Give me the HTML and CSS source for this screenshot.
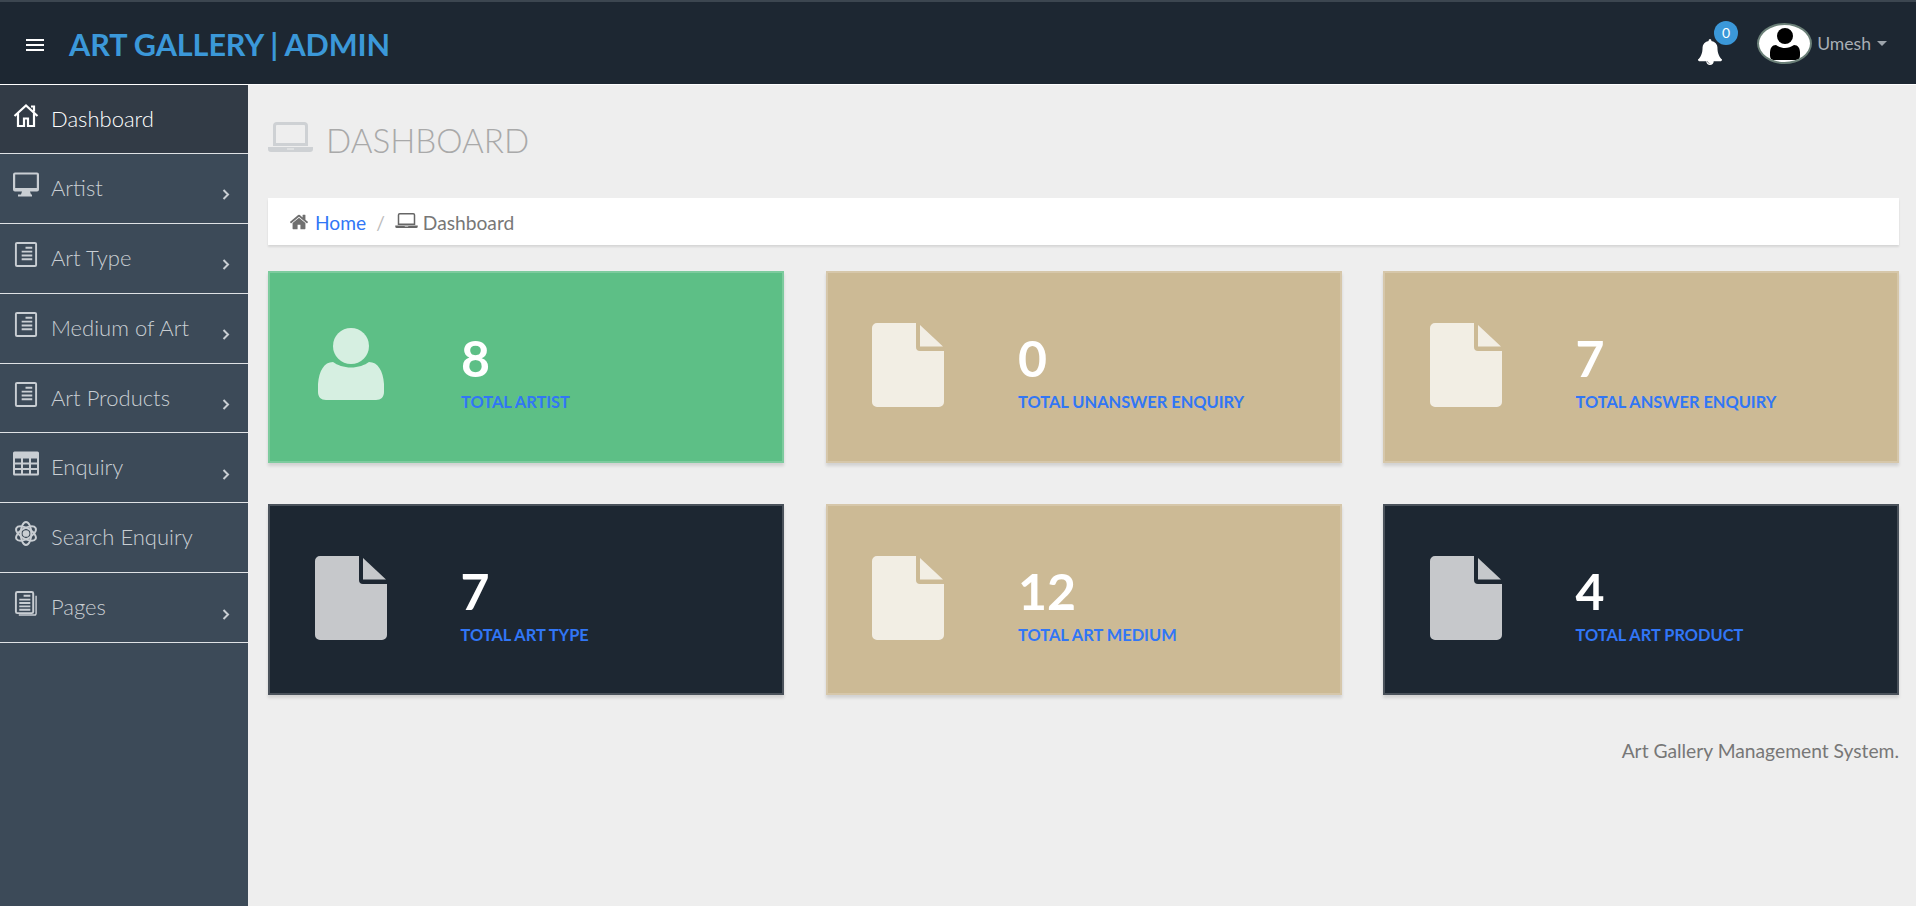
FILE: index.html
```html
<!DOCTYPE html>
<html lang="en">
<head>
<meta charset="utf-8">
<title>Art Gallery | Admin</title>
<link rel="stylesheet" href="styles.css">
</head>
<body>
<svg class="defs" width="0" height="0" aria-hidden="true">
  <symbol id="fa-home" viewBox="0 0 1792 1792"><path d="M1472 992v480q0 26-19 45t-45 19h-384v-384h-256v384h-384q-26 0-45-19t-19-45v-480q0-1 .5-3t.5-3l575-474 575 474q1 2 1 6zm223-69l-62 74q-8 9-21 11h-3q-13 0-21-7l-692-577-692 577q-12 8-24 7-13-2-21-11l-62-74q-8-10-7-23.5t11-21.5l719-599q32-26 76-26t76 26l244 204v-195q0-14 9-23t23-9h192q14 0 23 9t9 23v408l219 182q10 8 11 21.5t-7 23.5z"/></symbol>
  <symbol id="fa-bell" viewBox="0 0 1792 1792"><path d="M912 1696q0-16-16-16-59 0-101.5-42.5t-42.5-101.5q0-16-16-16t-16 16q0 73 51.5 124.5t124.5 51.5q16 0 16-16zm816-288q0 52-38 90t-90 38h-448q0 106-75 181t-181 75-181-75-75-181h-448q-52 0-90-38t-38-90q50-42 91-88t85-119.5 74.5-158.5 50-206 19.5-260q0-152 117-282.5t307-158.5q-8-19-8-39 0-40 28-68t68-28 68 28 28 68q0 20-8 39 190 28 307 158.5t117 282.5q0 139 19.5 260t50 206 74.5 158.5 85 119.5 91 88z"/></symbol>
  <symbol id="laptop" viewBox="0 0 45 30"><path fill-rule="evenodd" d="M9 0h27a4 4 0 0 1 4 4v20H5V4a4 4 0 0 1 4-4zm0 3a1 1 0 0 0-1 1v17h29V4a1 1 0 0 0-1-1z"/><path fill-rule="evenodd" d="M0 25h45v2a3 3 0 0 1-3 3H3a3 3 0 0 1-3-3zm19 1.6v1h7v-1z"/></symbol>
  <symbol id="i-house" viewBox="0 0 26 24"><path d="M1.500 12.500 13 2l11.500 10.500M5 10v12.500h6V15h4v7.500h6V10M18 3h3v5" fill="none" stroke="currentColor" stroke-width="2.200"/></symbol>
  <symbol id="i-desktop" viewBox="0 0 26 24"><path fill="currentColor" fill-rule="evenodd" d="M2 0h22a2 2 0 0 1 2 2v15a2 2 0 0 1-2 2h-7l1 3h1v2H5v-2h3l1-3H2a2 2 0 0 1-2-2V2a2 2 0 0 1 2-2zm.2 2v13.500h21.600V2z"/></symbol>
  <symbol id="i-doc" viewBox="0 0 23 26"><path d="M2.200 1h18.600a1.200 1.200 0 0 1 1.200 1.200v21.600a1.200 1.200 0 0 1-1.200 1.200H2.200A1.200 1.200 0 0 1 1 23.800V2.200A1.200 1.200 0 0 1 2.200 1z" fill="none" stroke="currentColor" stroke-width="2"/><path d="M11 6h7M7 10h11M7 14h11M7 18h11" stroke="currentColor" stroke-width="2" fill="none"/></symbol>
  <symbol id="i-table" viewBox="0 0 26 24"><path fill="currentColor" fill-rule="evenodd" d="M1.500 0h23A1.500 1.500 0 0 1 26 1.500v21a1.500 1.500 0 0 1-1.500 1.500h-23A1.500 1.500 0 0 1 0 22.500v-21A1.500 1.500 0 0 1 1.500 0zM2 7v4h6V7zm8 0v4h6V7zm8 0v4h6V7zM2 13v3.500h6V13zm8 0v3.500h6V13zm8 0v3.500h6V13zM2 18.500V22h6v-3.500zm8 0V22h6v-3.500zm8 0V22h6v-3.500z"/></symbol>
  <symbol id="i-atom" viewBox="0 0 24 26"><g fill="none" stroke="currentColor" stroke-width="2"><ellipse cx="12" cy="13" rx="11.500" ry="5.500" transform="rotate(30 12 13)"/><ellipse cx="12" cy="13" rx="11.500" ry="5.500" transform="rotate(-30 12 13)"/><ellipse cx="12" cy="13" rx="5.500" ry="12"/></g><circle cx="12" cy="13" r="3.500" fill="currentColor"/></symbol>
  <symbol id="i-pages" viewBox="0 0 23 26"><path d="M2.500 1h15a1.500 1.500 0 0 1 1.500 1.500v19a1.500 1.500 0 0 1-1.500 1.500h-15A1.500 1.500 0 0 1 1 21.500v-19A1.500 1.500 0 0 1 2.500 1z" fill="none" stroke="currentColor" stroke-width="2"/><path d="M22 5v18.500a1.500 1.500 0 0 1-1.500 1.500H4" fill="none" stroke="currentColor" stroke-width="1.500"/><path d="M9 5h7M4.500 9h11.500M4.500 12.500h11.500M4.500 16h11.500M4.500 19.500h11.500" stroke="currentColor" stroke-width="2" fill="none"/></symbol>
  <symbol id="i-chev" viewBox="0 0 8 11"><path d="M1.500 1l4.500 4.500L1.500 10" fill="none" stroke="currentColor" stroke-width="2"/></symbol>
  <symbol id="i-person" viewBox="0 0 66 72"><circle cx="33" cy="18" r="18"/><path d="M15 34c4 3 11 5.500 18 5.500S47 37 51 34c9 0 14 9 15 22v8c0 5-3 8-8 8H8c-5 0-8-3-8-8v-8C1 43 6 34 15 34z"/></symbol>
  <symbol id="i-file" viewBox="0 0 72 84"><path d="M5 0h39v24a4 4 0 0 0 4 4h24v51a5 5 0 0 1-5 5H5a5 5 0 0 1-5-5V5a5 5 0 0 1 5-5z"/><path d="M48 2l23 21.500H48z"/></symbol>
</svg>

<header class="topbar">
  <span class="burger"><i></i><i></i><i></i></span>
  <span class="brand">ART GALLERY | ADMIN</span>
  <div class="top-right">
    <span class="bell"><svg class="bell-icon"><use href="#fa-bell"/></svg><b class="badge">0</b></span>
    <span class="avatar"><svg viewBox="0 0 30 32" class="avatar-img"><circle cx="15" cy="8" r="8"/><path d="M6 17c3 2 6 3 9 3s6-1 9-3c4 0 6 3 6 8v2c0 3-1 5-4 5H4c-3 0-4-2-4-5v-2c0-5 2-8 6-8z"/></svg></span>
    <span class="user">Umesh</span>
    <span class="caret"></span>
  </div>
</header>

<div class="shell">
  <nav class="sidebar">
    <a class="nav-item active"><svg class="nav-icon"><use href="#i-house"/></svg><span class="nav-label">Dashboard</span></a>
    <a class="nav-item"><svg class="nav-icon"><use href="#i-desktop"/></svg><span class="nav-label">Artist</span><svg class="chev"><use href="#i-chev"/></svg></a>
    <a class="nav-item"><svg class="nav-icon"><use href="#i-doc"/></svg><span class="nav-label">Art Type</span><svg class="chev"><use href="#i-chev"/></svg></a>
    <a class="nav-item"><svg class="nav-icon"><use href="#i-doc"/></svg><span class="nav-label">Medium of Art</span><svg class="chev"><use href="#i-chev"/></svg></a>
    <a class="nav-item"><svg class="nav-icon"><use href="#i-doc"/></svg><span class="nav-label">Art Products</span><svg class="chev"><use href="#i-chev"/></svg></a>
    <a class="nav-item"><svg class="nav-icon"><use href="#i-table"/></svg><span class="nav-label">Enquiry</span><svg class="chev"><use href="#i-chev"/></svg></a>
    <a class="nav-item"><svg class="nav-icon"><use href="#i-atom"/></svg><span class="nav-label">Search Enquiry</span></a>
    <a class="nav-item"><svg class="nav-icon"><use href="#i-pages"/></svg><span class="nav-label">Pages</span><svg class="chev"><use href="#i-chev"/></svg></a>
  </nav>

  <main class="content">
    <h1 class="page-title"><svg class="title-icon"><use href="#laptop"/></svg>DASHBOARD</h1>
    <div class="crumbs">
      <svg class="crumb-home"><use href="#fa-home"/></svg><a class="crumb-link">Home</a>
      <span class="crumb-sep">/</span>
      <svg class="crumb-laptop"><use href="#laptop"/></svg><span>Dashboard</span>
    </div>
    <section class="cards">
      <article class="card green"><svg class="card-icon person"><use href="#i-person"/></svg><div class="card-text"><strong>8</strong><span>TOTAL ARTIST</span></div></article>
      <article class="card tan"><svg class="card-icon"><use href="#i-file"/></svg><div class="card-text"><strong>0</strong><span>TOTAL UNANSWER ENQUIRY</span></div></article>
      <article class="card tan"><svg class="card-icon"><use href="#i-file"/></svg><div class="card-text"><strong>7</strong><span>TOTAL ANSWER ENQUIRY</span></div></article>
      <article class="card dark"><svg class="card-icon"><use href="#i-file"/></svg><div class="card-text"><strong>7</strong><span>TOTAL ART TYPE</span></div></article>
      <article class="card tan"><svg class="card-icon"><use href="#i-file"/></svg><div class="card-text"><strong>12</strong><span>TOTAL ART MEDIUM</span></div></article>
      <article class="card dark"><svg class="card-icon"><use href="#i-file"/></svg><div class="card-text"><strong>4</strong><span>TOTAL ART PRODUCT</span></div></article>
    </section>
    <footer class="foot">Art Gallery Management System.</footer>
  </main>
</div>
</body>
</html>
```

FILE: styles.css
```css
* { box-sizing: border-box; }
html, body { margin: 0; height: 100%; }
body {
  font-family: Lato, "Liberation Sans", sans-serif;
  background: #eeeeee;
  color: #777;
  overflow: hidden;
  height: 906px;
  display: flex;
  flex-direction: column;
}
.defs { position: absolute; }

.topbar {
  height: 85px;
  flex: none;
  background: #1d2732;
  border-top: 2px solid #3c4650;
  border-bottom: 1px solid #fff;
  display: flex;
  align-items: center;
  padding: 0 29px 0 26px;
}
.burger { width: 18px; display: flex; flex-direction: column; gap: 3px; margin-top: 3px; }
.burger i { display: block; height: 2px; background: #fff; }
.brand {
  margin-left: 25px;
  margin-top: 2px;
  font-size: 30.6px;
  font-weight: 700;
  color: #3b98d9;
  letter-spacing: -0.1px;
  white-space: nowrap;
}
.top-right { margin-left: auto; display: flex; align-items: center; }
.bell { position: relative; width: 26px; height: 26px; margin-top: 17px; margin-right: 34px; }
.bell-icon { width: 26px; height: 26px; fill: #fff; display: block; }
.badge {
  position: absolute;
  left: 17px;
  top: -18px;
  width: 24px;
  height: 24px;
  border-radius: 50%;
  background: #3b98d9;
  color: #fff;
  font-size: 14px;
  font-weight: 400;
  line-height: 24px;
  text-align: center;
}
.avatar {
  width: 55px;
  height: 41px;
  border-radius: 50%;
  background: #fff;
  border: 2px solid #6b8078;
  display: flex;
  align-items: flex-end;
  justify-content: center;
  overflow: hidden;
  margin-top: 1px;
}
.avatar-img { width: 30px; height: 32px; fill: #000; margin-bottom: 2px; }
.user { margin-left: 5px; font-size: 17.6px; color: #a8aeb5; }
.caret {
  margin-left: 6px;
  width: 0;
  height: 0;
  border-left: 5px solid transparent;
  border-right: 5px solid transparent;
  border-top: 5px solid #9da4ab;
}

.shell { flex: 1; display: flex; min-height: 0; }
.sidebar {
  width: 248px;
  flex: none;
  background: #3c4a58;
  display: grid;
  grid-template-rows: 69px;
  grid-auto-rows: 69.86px;
  align-content: start;
}
.nav-item {
  position: relative;
  display: flex;
  align-items: center;
  width: 247.5px;
  padding: 0 12px 2px 13px;
  border-bottom: 1px solid #dfe2e5;
  color: #c9ced3;
  font-size: 22px;
  font-weight: 300;
}
.nav-item.active { background: #323b46; color: #fff; }
.nav-icon { width: 26px; height: 25px; flex: none; margin-top: -6px; }
.nav-label { margin-left: 12px; white-space: nowrap; }
.chev { margin-left: auto; width: 8px; height: 11px; margin-top: 15px; margin-right: 6px; flex: none; }

.content { flex: 1; min-width: 0; padding: 0 17px 0 20px; }
.page-title {
  margin: 0;
  height: 113px;
  display: flex;
  align-items: center;
  font-size: 33.2px;
  font-weight: 300;
  color: #a9a9a9;
  padding-bottom: 4px;
}
.title-icon { width: 45px; height: 30px; fill: #ced1d4; margin-right: 13px; margin-top: -6px; }
.crumbs {
  height: 47px;
  background: #fff;
  box-shadow: 0 2px 2px rgba(0,0,0,.1);
  display: flex;
  align-items: center;
  padding: 2px 21px 0;
  font-size: 19.2px;
  color: #777;
}
.crumb-home { width: 20px; height: 20px; fill: #6f6f6f; margin-right: 6px; margin-top: -2px; }
.crumb-link { color: #3176f6; }
.crumb-sep { color: #bbb; margin: 0 10px; }
.crumb-laptop { width: 23px; height: 15px; fill: #666; margin-right: 5px; margin-top: -4px; }

.cards {
  margin-top: 26px;
  display: grid;
  grid-template-columns: repeat(3, 1fr);
  grid-auto-rows: 191.5px;
  gap: 41px 41.5px;
}
.card {
  display: flex;
  align-items: center;
  position: relative;
  border: 2px solid rgba(255,255,255,.2);
  box-shadow: 0 3px 3px rgba(0,0,0,.12);
}
.green { background: #5dbf86; }
.tan { background: #ccba95; }
.dark { background: #1d2732; }
.card-icon {
  width: 72px;
  height: 84px;
  margin-left: 44.5px;
  margin-top: -3px;
  flex: none;
  fill: rgba(255,255,255,.75);
  overflow: visible;
}
.person { width: 66px; height: 72px; margin-left: 48px; margin-top: -5px; }
.card-text { margin-left: 74px; display: flex; flex-direction: column; padding-top: 9px; }
.person + .card-text { margin-left: 77px; }
.card-text strong {
  color: #fff;
  font-size: 50px;
  font-weight: 700;
  line-height: 60px;
}
.card-text span {
  color: #3176f6;
  font-size: 16.4px;
  font-weight: 700;
  line-height: 24px;
  margin-top: 2px;
  white-space: nowrap;
}
.foot {
  margin-top: 44px;
  text-align: right;
  font-size: 19.25px;
  color: #777;
}
```
